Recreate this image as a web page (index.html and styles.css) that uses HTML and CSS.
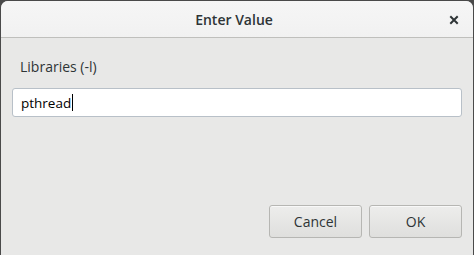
FILE: index.html
```html
<!DOCTYPE html>
<html>
<head>
<meta charset="utf-8">
<link rel="stylesheet" href="styles.css">
</head>
<body>
<div class="dialog">
  <header class="titlebar">
    <span class="title">Enter Value</span>
    <span class="close" aria-label="Close">
      <svg width="10" height="10" viewBox="0 0 10 10"><path d="M2 2 L8 8 M8 2 L2 8" stroke="#2e3436" stroke-width="2" stroke-linecap="square"/></svg>
    </span>
  </header>
  <main class="content">
    <label class="label">Libraries (-l)</label>
    <div class="entry"><span class="value">pthread</span><span class="cursor"></span></div>
    <div class="spacer"></div>
    <div class="actions">
      <button class="btn">Cancel</button>
      <button class="btn">OK</button>
    </div>
  </main>
</div>
</body>
</html>
```
FILE: styles.css
```css
* { box-sizing: border-box; }
html, body { margin: 0; padding: 0; }
body {
  width: 474px;
  height: 255px;
  background: #4a4a4a;
  font-family: "Open Sans", "Noto Sans", sans-serif;
  color: #2e3436;
  overflow: hidden;
}
.dialog {
  margin: 1px 1px 0 1px;
  width: 472px;
  height: 254px;
  background: #e8e8e7;
  border-radius: 7px 7px 0 0;
  display: flex;
  flex-direction: column;
  overflow: hidden;
}
.titlebar {
  position: relative;
  height: 37px;
  flex: none;
  background: linear-gradient(#f6f6f6, #f1f1f1);
  border-bottom: 1px solid #bfbfbc;
  display: flex;
  align-items: center;
  justify-content: center;
}
.title {
  font-size: 14px;
  font-weight: 600;
  color: #2e3436;
  margin-right: 6px;
}
.close {
  position: absolute;
  right: 14px;
  top: 14px;
  width: 10px;
  height: 10px;
  display: block;
}
.close svg { display: block; }
.content {
  flex: 1;
  display: flex;
  flex-direction: column;
  padding: 20px 11px 17px 11px;
}
.label {
  font-size: 14px;
  margin-left: 8px;
  line-height: 18px;
}
.entry {
  margin-top: 12px;
  height: 29px;
  background: #fff;
  border: 1px solid #b8c0c8;
  border-radius: 3px;
  display: flex;
  align-items: center;
  padding-left: 8px;
  font-size: 13.5px;
  color: #000;
}
.cursor {
  width: 1px;
  height: 17px;
  background: #000;
  margin-left: 1px;
}
.spacer { flex: 1; }
.actions {
  display: flex;
  justify-content: flex-end;
  gap: 7px;
}
.btn {
  width: 93px;
  height: 33px;
  font-family: inherit;
  font-size: 14px;
  color: #2e3436;
  background: linear-gradient(#ededec, #dfdfdd);
  border: 1px solid #b6b6b3;
  border-radius: 3px;
  box-shadow: inset 0 1px #f8f8f8;
  padding: 0;
}
```
